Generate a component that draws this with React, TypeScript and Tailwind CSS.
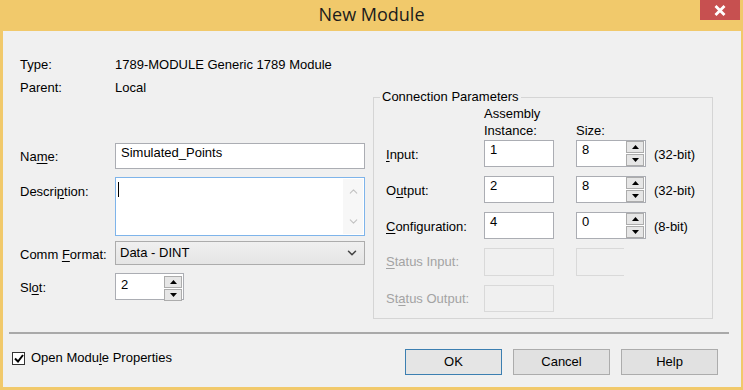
import type { ReactNode } from 'react';
import { ChevronDown, ChevronUp } from 'lucide-react';

function Arrow({ up }: { up?: boolean }) {
  return (
    <svg width="7" height="4" viewBox="0 0 7 4">
      <path d={up ? 'M0 4 L3.5 0 L7 4 Z' : 'M0 0 L3.5 4 L7 0 Z'} fill="#000" />
    </svg>
  );
}

function SpinButtons() {
  return (
    <div className="flex flex-col gap-[1px] my-auto mr-[1px]">
      <div className="w-[18px] h-[12px] border border-[#acacac] bg-[#e6e6e6] flex items-center justify-center">
        <Arrow up />
      </div>
      <div className="w-[18px] h-[12px] border border-[#acacac] bg-[#e6e6e6] flex items-center justify-center">
        <Arrow />
      </div>
    </div>
  );
}

function TextBox({ value, className, spin }: { value: string; className: string; spin?: boolean }) {
  return (
    <div className={`flex bg-white border border-[#abadb3] ${className}`}>
      <div className="flex-1 pl-[5px] pt-[1px] leading-[16px]">{value}</div>
      {spin && <SpinButtons />}
    </div>
  );
}

function Label({ children, className = '' }: { children: ReactNode; className?: string }) {
  return <div className={`w-[95px] shrink-0 ${className}`}>{children}</div>;
}

type Row = { label: ReactNode; asm: string; size: string; unit: string };

const rows: Row[] = [
  { label: <><u className="underline-offset-2">I</u>nput:</>, asm: '1', size: '8', unit: '(32-bit)' },
  { label: <>O<u className="underline-offset-2">u</u>tput:</>, asm: '2', size: '8', unit: '(32-bit)' },
  { label: <><u className="underline-offset-2">C</u>onfiguration:</>, asm: '4', size: '0', unit: '(8-bit)' },
];

export default function App() {
  return (
    <div className="w-[743px] h-[390px] bg-[#f1c96b] flex flex-col font-['Liberation_Sans',Arial,sans-serif] text-[13px] text-black">
      <div className="h-[31px] grid grid-cols-[1fr_auto_1fr] shrink-0">
        <div />
        <div className="pt-[2px] font-['Open_Sans',sans-serif] text-[18px] leading-[24px] text-[#1b1b1b]">New Module</div>
        <div className="justify-self-end self-start mr-[3px] w-[40px] h-[20px] bg-[#c75050] flex items-center justify-center">
          <svg width="12" height="11" viewBox="0 0 12 11">
            <path d="M1.5 1 L10.5 10 M10.5 1 L1.5 10" stroke="#fff" strokeWidth="2.8" />
          </svg>
        </div>
      </div>

      <div className="flex-1 ml-[3px] mr-[2px] mb-[3px] bg-[#f0f0f0] flex flex-col">
        <div className="flex items-start">
          {/* left column */}
          <div className="pl-[17px] pt-[26px] flex flex-col leading-[16px]">
            <div className="flex">
              <Label>Type:</Label>
              <div>1789-MODULE Generic 1789 Module</div>
            </div>
            <div className="flex mt-[7px]">
              <Label>Parent:</Label>
              <div>Local</div>
            </div>
            <div className="flex items-center mt-[47px]">
              <Label className="pt-[2px]">Na<u className="underline-offset-2">m</u>e:</Label>
              <TextBox value="Simulated_Points" className="w-[250px] h-[26px]" />
            </div>
            <div className="flex mt-[8px]">
              <Label className="pt-[7px]">Descri<u className="underline-offset-2">p</u>tion:</Label>
              <div className="w-[250px] h-[59px] bg-white border border-[#7eb4ea] flex">
                <div className="flex-1">
                  <div className="w-[1px] h-[15px] bg-black ml-[2px] mt-[4px]" />
                </div>
                <div className="w-[20px] my-[1px] mr-[1px] bg-[#f7f7f7] flex flex-col items-center justify-between py-[6px]">
                  <ChevronUp size={13} strokeWidth={2} color="#c2c2c2" />
                  <ChevronDown size={13} strokeWidth={2} color="#c2c2c2" />
                </div>
              </div>
            </div>
            <div className="flex items-center mt-[5px]">
              <Label className="pt-[3px]">Comm <u className="underline-offset-2">F</u>ormat:</Label>
              <div className="w-[250px] h-[24px] border border-[#acacac] bg-gradient-to-b from-[#f0f0f0] to-[#e5e5e5] flex items-center pl-[4px] pr-[5px]">
                <div className="flex-1">Data - DINT</div>
                <ChevronDown size={14} strokeWidth={2.6} color="#444" />
              </div>
            </div>
            <div className="flex items-center mt-[8px]">
              <Label className="pt-[2px]">Sl<u className="underline-offset-2">o</u>t:</Label>
              <TextBox value="2" className="w-[69px] h-[27px] pt-[2px]" spin />
            </div>
          </div>

          {/* connection parameters */}
          <fieldset className="ml-[8px] mt-[58px] w-[340px] border border-[#d5d5d5] pl-[6px] pb-[6px] leading-[16px]">
            <legend className="px-[2px]">Connection Parameters</legend>
            <div className="pl-[6px] flex flex-col">
              <div className="flex items-end leading-[17px]">
                <div className="w-[98px]" />
                <div className="w-[92px]">
                  Assembly
                  <br />
                  Instance:
                </div>
                <div>Size:</div>
              </div>
              <div className="flex flex-col gap-[9px] mt-[1px]">
                {rows.map((r, i) => (
                  <div key={i} className="flex items-center h-[27px]">
                    <div className="w-[98px] pt-[2px]">{r.label}</div>
                    <TextBox value={r.asm} className="w-[70px] h-[27px]" />
                    <TextBox value={r.size} className="w-[70px] h-[27px] ml-[22px]" spin />
                    <div className="ml-[8px] pt-[2px]">{r.unit}</div>
                  </div>
                ))}
                <div className="flex items-center h-[28px] text-[#a3a3a3]">
                  <div className="w-[98px]">
                    <u className="underline-offset-2">S</u>tatus Input:
                  </div>
                  <div className="w-[70px] h-[28px] border border-[#d9d9d9]" />
                  <div className="w-[48px] h-[28px] ml-[22px] border border-r-0 border-[#d9d9d9]" />
                </div>
                <div className="flex items-center h-[27px] text-[#a3a3a3]">
                  <div className="w-[98px]">
                    St<u className="underline-offset-2">a</u>tus Output:
                  </div>
                  <div className="w-[70px] h-[27px] border border-[#d9d9d9]" />
                </div>
              </div>
            </div>
          </fieldset>
        </div>

        <div className="ml-[6px] mt-[13px] w-[720px] h-[2px] bg-[#a9a9a9]" />

        <div className="flex items-start justify-between pl-[9px] pr-[23px] mt-[15px]">
          <div className="flex items-center gap-[6px] mt-[1px]">
            <div className="w-[13px] h-[13px] border border-[#333] bg-white flex items-center justify-center">
              <svg width="10" height="9" viewBox="0 0 10 9">
                <path d="M1 4.5 L4 7.5 L9 1" stroke="#000" strokeWidth="2" fill="none" />
              </svg>
            </div>
            <div className="leading-[16px]">
              Open Modu<u className="underline-offset-2">l</u>e Properties
            </div>
          </div>
          <div className="flex gap-[11px]">
            <button className="w-[97px] h-[26px] border border-[#3c7fb1] bg-[#e5e5e5]">OK</button>
            <button className="w-[97px] h-[26px] border border-[#acacac] bg-[#e1e1e1]">Cancel</button>
            <button className="w-[97px] h-[26px] border border-[#acacac] bg-[#e1e1e1]">Help</button>
          </div>
        </div>
      </div>
    </div>
  );
}
